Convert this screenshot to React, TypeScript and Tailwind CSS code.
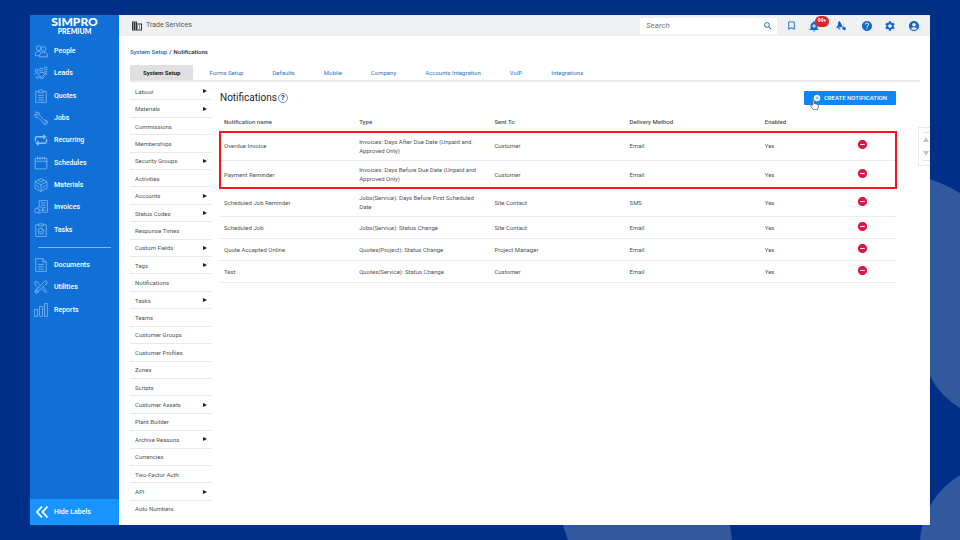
import type { ReactNode } from 'react';
import {
  MdAccountCircle,
  MdAddAlert,
  MdAddCircle,
  MdBookmarkBorder,
  MdDomain,
  MdHelp,
  MdRemoveCircle,
  MdSearch,
  MdSettings,
} from 'react-icons/md';

type NavItem = { label: string; icon: ReactNode };

type Notification = {
  name: string;
  type: string;
  sentTo: string;
  method: string;
};

const mainNav: NavItem[] = [
  {
    label: 'People',
    icon: (
      <>
        <circle cx="8" cy="7" r="4" />
        <circle cx="16.500" cy="8.500" r="4" />
        <path d="M2 20c0-5 2-7.500 6-7.500 2 0 3 .5 4 1.500M2 20h6" />
        <path d="M9 22c0-5 3-8 7.500-8s7 3 7 8z" />
      </>
    ),
  },
  {
    label: 'Leads',
    icon: (
      <>
        <circle cx="4.500" cy="8" r="2.500" />
        <circle cx="12" cy="6" r="2.500" />
        <circle cx="20" cy="4" r="2.500" />
        <path d="M1 15c1-4 5-4 7-1 2-4 6-4 8-2 1-3 5-4 7-2" />
        <path d="M2 21l6-5 5 3 8-7M17 12h4v4M5 22l4-3 5 3 4-5" />
      </>
    ),
  },
  {
    label: 'Quotes',
    icon: (
      <>
        <path d="M8 4H3v19h18V4h-5" />
        <path d="M8 3h2a2 2 0 0 1 4 0h2v3.500H8z" />
        <path d="M7 11h10M7 15h10M7 19h10" />
      </>
    ),
  },
  {
    label: 'Jobs',
    icon: (
      <path d="M3 2l4 4-1.500 2L1.500 5C0 9 3 12 7 11l8 8c0 3 3 5 6 4l-3-3 2-2 3 3c1-4-2-6-5-5l-8-8c1-4-3-7-7-6z" />
    ),
  },
  {
    label: 'Recurring',
    icon: (
      <path d="M2.500 14V9.500c0-2 1-3 3-3H19M16 3l4 3.500L16 10M21.500 10v4.500c0 2-1 3-3 3H5M8 14l-4 3.500L8 21" strokeWidth="2.4" />
    ),
  },
  {
    label: 'Schedules',
    icon: (
      <>
        <path d="M2 4h20v18H2zM2 9h20" />
        <path d="M6 1v5M10 1v5M14 1v5M18 1v5" />
      </>
    ),
  },
  {
    label: 'Materials',
    icon: (
      <>
        <path d="M12 1l10 5v12l-10 5-10-5V6z" />
        <path d="M2 6l10 6 10-6M12 12v11M7 3.500L12 7l5-3.500M5 12l4 6M19 12l-4 6" />
      </>
    ),
  },
  {
    label: 'Invoices',
    icon: (
      <>
        <path d="M9 11V1h14v20h-8" />
        <path d="M12 5h8M12 9h8M15 13h5M15 17h5" />
        <circle cx="5" cy="18" r="4" />
        <path d="M5 14c2-3 9-3 10 1v4c-1 4-7 4-9 3M9 17c2 1 5 1 6-1" />
      </>
    ),
  },
  {
    label: 'Tasks',
    icon: (
      <>
        <path d="M8 3H3v20h18V3h-5" />
        <path d="M8 1.500h8V5H8z" />
        <circle cx="12" cy="14" r="5" />
        <path d="M9.500 14l2 2 3.500-4" />
      </>
    ),
  },
];

const toolNav: NavItem[] = [
  {
    label: 'Documents',
    icon: (
      <>
        <path d="M3 1h12l6 6v16H3zM15 1v6h6" />
        <path d="M7 11h10M7 15h10M7 19h10" />
      </>
    ),
  },
  {
    label: 'Utilities',
    icon: (
      <>
        <path d="M2 3h4l4 6M2 3v5l6 6M14 15l6 7 2-2-6-8" />
        <path d="M22 2v5l-3 1-11 11c0 3-3 5-6 3v-4c1-3 3-3 4-3L16 5c1-3 3-4 6-3z" />
        <circle cx="5" cy="19" r="1.500" />
      </>
    ),
  },
  {
    label: 'Reports',
    icon: (
      <path d="M1 11h5v12H1zM9.500 6h5v17h-5zM18 1h5v22h-5z" />
    ),
  },
];

const tabs = ['System Setup', 'Forms Setup', 'Defaults', 'Mobile', 'Company', 'Accounts Integration', 'VoIP', 'Integrations'];

const menu = [
  { label: 'Labour', sub: true },
  { label: 'Materials', sub: true },
  { label: 'Commissions' },
  { label: 'Memberships' },
  { label: 'Security Groups', sub: true },
  { label: 'Activities' },
  { label: 'Accounts', sub: true },
  { label: 'Status Codes', sub: true },
  { label: 'Response Times' },
  { label: 'Custom Fields', sub: true },
  { label: 'Tags', sub: true },
  { label: 'Notifications' },
  { label: 'Tasks', sub: true },
  { label: 'Teams' },
  { label: 'Customer Groups' },
  { label: 'Customer Profiles' },
  { label: 'Zones' },
  { label: 'Scripts' },
  { label: 'Customer Assets', sub: true },
  { label: 'Plant Builder' },
  { label: 'Archive Reasons', sub: true },
  { label: 'Currencies' },
  { label: 'Two-Factor Auth' },
  { label: 'API', sub: true },
  { label: 'Auto Numbers' },
];

const highlighted: Notification[] = [
  { name: 'Overdue Invoice', type: 'Invoices: Days After Due Date (Unpaid and Approved Only)', sentTo: 'Customer', method: 'Email' },
  { name: 'Payment Reminder', type: 'Invoices: Days Before Due Date (Unpaid and Approved Only)', sentTo: 'Customer', method: 'Email' },
];

const others: Notification[] = [
  { name: 'Scheduled Job Reminder', type: 'Jobs(Service): Days Before First Scheduled Date', sentTo: 'Site Contact', method: 'SMS' },
  { name: 'Scheduled Job', type: 'Jobs(Service): Status Change', sentTo: 'Site Contact', method: 'Email' },
  { name: 'Quote Accepted Online', type: 'Quotes(Project): Status Change', sentTo: 'Project Manager', method: 'Email' },
  { name: 'Test', type: 'Quotes(Service): Status Change', sentTo: 'Customer', method: 'Email' },
];

function NavList({ items }: { items: NavItem[] }) {
  return (
    <>
      {items.map((item) => (
        <li key={item.label} className="flex flex-1 items-center">
          <a href="#" className="flex items-center gap-1.5 pl-1">
            <svg viewBox="0 0 24 24" className="size-[14px] fill-none stroke-[#8cc0f3]" strokeWidth="1.3" strokeLinejoin="round">
              {item.icon}
            </svg>
            {item.label}
          </a>
        </li>
      ))}
    </>
  );
}

function Sidebar() {
  return (
    <aside className="flex w-[89px] shrink-0 flex-col bg-[#1070d8] text-[7px] font-medium text-white">
      <div className="flex h-[25px] flex-col items-center pt-px font-['Lato',sans-serif] font-black">
        <span className="text-[12px] leading-[11px]">SIMPRO</span>
        <span className="text-[7px] leading-[9px]">PREMIUM</span>
      </div>
      <nav>
        <ul className="flex h-[201px] flex-col">
          <NavList items={mainNav} />
        </ul>
        <hr className="mx-2 my-1.5 border-[#7fb5ee]" />
        <ul className="flex h-[67px] flex-col">
          <NavList items={toolNav} />
        </ul>
      </nav>
      <button type="button" className="mt-auto flex h-[26px] items-center gap-1.5 bg-[#1994ff] pl-1.5">
        <svg viewBox="0 0 12 12" className="size-3 fill-none stroke-white" strokeWidth="1.8">
          <path d="M6 0.500L1 6l5 5.500M11.500 0.500L6.500 6l5 5.500" />
        </svg>
        Hide Labels
      </button>
    </aside>
  );
}

function TopBar() {
  return (
    <header className="flex h-[21px] items-center bg-[#eff0f2] pr-[10px] pl-3 text-[#1069cb]">
      <MdDomain className="size-3 text-[#2f3238]" />
      <span className="ml-[3px] text-[7px] text-[#55585e]">Trade Services</span>
      <label className="ml-auto flex h-4 w-[137px] items-center bg-white pr-1 pl-1.5">
        <input type="text" aria-label="Search" placeholder="Search" className="min-w-0 flex-1 text-[8px] italic outline-none placeholder:text-[#777]" />
        <MdSearch className="size-2.5" />
      </label>
      <button type="button" aria-label="Bookmarks" className="ml-[9px]">
        <MdBookmarkBorder className="size-[11px]" />
      </button>
      <button type="button" aria-label="Alerts" className="relative ml-[11px]">
        <MdAddAlert className="size-3" />
        <span className="absolute -top-1 left-[7px] flex h-[11px] w-[14px] items-center justify-center rounded-full bg-[#e02424] text-[5px] font-bold text-white">
          99+
        </span>
      </button>
      <button type="button" aria-label="Shortcuts" className="ml-4">
        <svg viewBox="0 0 20 20" className="size-2.5 fill-current">
          <path d="M6 0l2 1 4 8 1 3-12 2 0-2 3-4V4z" />
          <path d="M4 15l5-1c0 3-4 4-5 1zM14 9l1 2 4 2 1 2-2 4-6-3 1-2z" />
        </svg>
      </button>
      <button type="button" aria-label="Help" className="ml-[15px]">
        <MdHelp className="size-3" />
      </button>
      <button type="button" aria-label="Settings" className="ml-[11px]">
        <MdSettings className="size-3" />
      </button>
      <button type="button" aria-label="Account" className="ml-3">
        <MdAccountCircle className="size-3" />
      </button>
    </header>
  );
}

function SideMenu() {
  return (
    <ul className="flex w-[82px] shrink-0 flex-col pt-px pb-2 text-[6px] text-[#505359]">
      {menu.map((item) => (
        <li key={item.label} className="flex flex-1 border-b border-[#e9e9ec] last:border-b-0">
          <a href="#" className="flex flex-1 items-center justify-between pr-[5px] pl-[5px] leading-[9px]">
            {item.label}
            {item.sub && (
              <svg viewBox="0 0 4 4" className="size-1 fill-[#1b1d22]">
                <path d="M0 0l4 2-4 2z" />
              </svg>
            )}
          </a>
        </li>
      ))}
    </ul>
  );
}

function Rows({ items, rowClass }: { items: Notification[]; rowClass?: string }) {
  return (
    <>
      {items.map((n) => (
        <tr key={n.name} className={`border-b border-[#ececef] ${rowClass ?? 'h-[22px]'}`}>
          <td className="px-1">{n.name}</td>
          <td className="px-1">{n.type}</td>
          <td className="px-1">{n.sentTo}</td>
          <td className="px-1">{n.method}</td>
          <td className="px-1">Yes</td>
          <td className="pb-0.5">
            <button type="button" aria-label={`Remove ${n.name}`} className="mx-auto block text-[#e01546]">
              <MdRemoveCircle className="size-[11px]" />
            </button>
          </td>
        </tr>
      ))}
    </>
  );
}

function NotificationsTable() {
  return (
    <table className="w-full table-fixed border-collapse text-left text-[6px] leading-[9px] text-[#505359]">
      <thead>
        <tr className="h-[21px]">
          <th className="w-1/5 px-1 font-medium">Notification name</th>
          <th className="w-1/5 px-1 font-medium">Type</th>
          <th className="w-1/5 px-1 font-medium">Sent To</th>
          <th className="w-1/5 px-1 font-medium">Delivery Method</th>
          <th className="w-1/10 px-1 font-medium">Enabled</th>
          <th className="w-1/10" aria-label="Remove" />
        </tr>
      </thead>
      <tbody className="outline-2 -outline-offset-1 outline-[#f5141c]">
        <Rows items={highlighted} rowClass="h-7" />
      </tbody>
      <tbody>
        <Rows items={others.slice(0, 1)} rowClass="h-7" />
        <Rows items={others.slice(1)} />
      </tbody>
    </table>
  );
}

function Cursor() {
  return (
    <svg viewBox="0 0 16 20" className="absolute top-2 left-1.5 h-[11px] w-[9px] fill-white stroke-[#555]" strokeWidth="1.4" strokeLinejoin="round">
      <path d="M5 11V2.500c0-2 2.500-2 2.500 0V8l5.500 1.500c1.500.5 2 1.500 2 2.500v3l-2 4.500H6L1 13c-1-1.500 1-3 2.500-1.500z" />
    </svg>
  );
}

export default function App() {
  return (
    <div className="relative isolate flex min-h-screen bg-[#002f87] px-[30px] py-[15px] font-['Roboto',sans-serif]">
      <svg viewBox="0 0 960 540" preserveAspectRatio="xMaxYMax slice" className="absolute inset-0 -z-10 size-full fill-[#32599d]">
        <path d="M920 176Q942 182 960 193V408Q940 396 930 376L920 350z" />
        <circle cx="1001" cy="545" r="81" />
        <path d="M560 515Q563 527 568 540H732Q731 530 728 515z" />
      </svg>

      <div className="relative flex flex-1 bg-white">
        <Sidebar />

        <main className="flex min-w-0 flex-1 flex-col">
          <TopBar />

          <nav aria-label="Breadcrumb" className="flex h-[29px] items-center gap-0.5 pt-px pl-[11px] text-[6px] font-medium text-[#222428]">
            <a href="#" className="text-[#1069cb]">System Setup</a>
            <span>/</span>
            <span>Notifications</span>
          </nav>

          <nav className="mr-2.5 ml-[11px] flex h-[17px] gap-[3px] border-b-2 border-[#e9e9eb] text-[6px] text-[#2b74c6]">
            {tabs.map((tab, i) => (
              <a
                key={tab}
                href="#"
                className={`flex items-center px-[13px] ${i === 0 ? 'bg-[#e0e0e0] font-bold text-[#222428]' : ''}`}
              >
                {tab}
              </a>
            ))}
          </nav>

          <div className="flex flex-1 pl-[11px]">
            <SideMenu />

            <section className="ml-2 min-w-0 flex-1 pr-[34px]">
              <div className="flex h-[29px] items-center gap-px pt-0.5">
                <h1 className="text-[10px] text-[#222428]">Notifications</h1>
                <button type="button" aria-label="About notifications" className="flex size-2.5 items-center justify-center rounded-full border border-[#6f93c4] text-[8px] leading-[8px] font-bold text-[#123f86]">
                  ?
                </button>
                <button type="button" className="relative ml-auto flex h-[14px] items-center gap-[3px] rounded-[1px] bg-[#0a87fb] px-[9px] text-[6px] font-medium text-white">
                  <MdAddCircle className="size-2" />
                  CREATE NOTIFICATION
                  <Cursor />
                </button>
              </div>
              <NotificationsTable />
            </section>
          </div>
        </main>

        {/* scroll control docked on the window edge */}
        <div className="absolute top-28 right-0 flex h-[39px] w-3 flex-col border border-r-0 border-[#ebebed] bg-white py-1 pl-1">
          <button type="button" aria-label="Scroll up" className="flex flex-1 items-center border-t border-[#e4e4e6]">
            <svg viewBox="0 0 6 5" className="h-[5px] w-1.5 fill-[#c4c4c8]">
              <path d="M0 5l3-5 3 5z" />
            </svg>
          </button>
          <button type="button" aria-label="Scroll down" className="flex flex-1 items-center border-b border-[#e4e4e6]">
            <svg viewBox="0 0 6 5" className="h-[5px] w-1.5 fill-[#c4c4c8]">
              <path d="M0 0l3 5 3-5z" />
            </svg>
          </button>
        </div>
      </div>
    </div>
  );
}
